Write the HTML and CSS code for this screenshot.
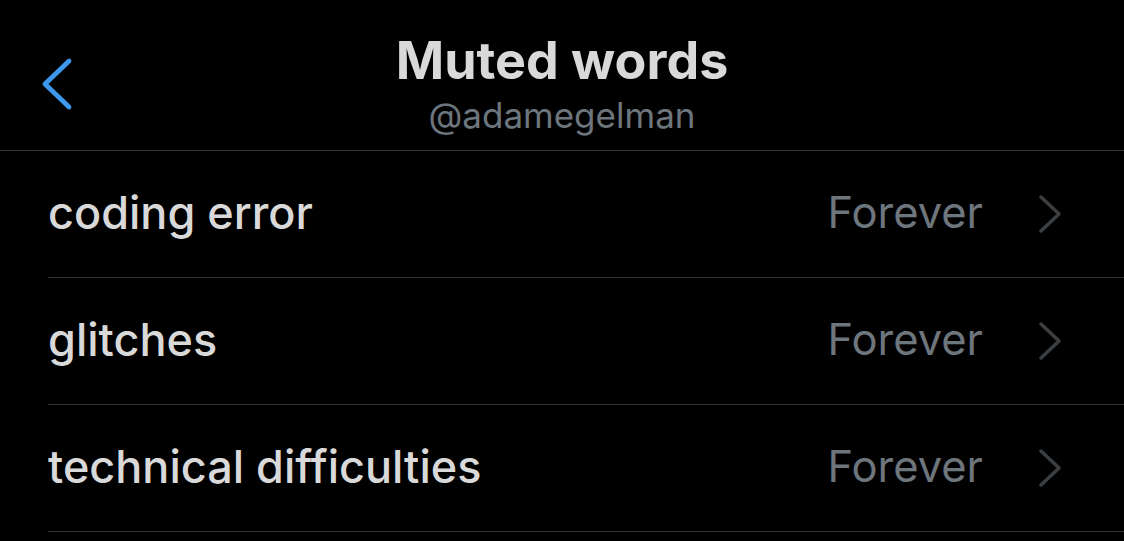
FILE: index.html
```html
<!DOCTYPE html>
<html lang="en">

<head>
	<meta charset="utf-8">
	<title>Muted words</title>
	<link rel="stylesheet" href="styles.css">
</head>

<body>
	<header class="topbar">
		<button class="tilbage" aria-label="Back">
			<svg width="40" height="56" viewBox="0 0 40 56">
				<polyline points="28,4 4,27 28,50" fill="none" stroke="#3d98eb" stroke-width="4.8" stroke-linecap="round" stroke-linejoin="round" />
			</svg>
		</button>
		<div class="titel">
			<h1>Muted words</h1>
			<p class="bruger">@adamegelman</p>
		</div>
	</header>

	<ul class="ordliste">
		<li class="ord">
			<span class="navn">coding error</span>
			<span class="varighed">Forever</span>
			<svg class="pil" width="24" height="40" viewBox="0 0 24 40">
				<polyline points="3,3 21,20 3,37" fill="none" stroke="#3c3f42" stroke-width="3.5" stroke-linecap="round" stroke-linejoin="round" />
			</svg>
		</li>
		<li class="ord">
			<span class="navn">glitches</span>
			<span class="varighed">Forever</span>
			<svg class="pil" width="24" height="40" viewBox="0 0 24 40">
				<polyline points="3,3 21,20 3,37" fill="none" stroke="#3c3f42" stroke-width="3.5" stroke-linecap="round" stroke-linejoin="round" />
			</svg>
		</li>
		<li class="ord">
			<span class="navn">technical difficulties</span>
			<span class="varighed">Forever</span>
			<svg class="pil" width="24" height="40" viewBox="0 0 24 40">
				<polyline points="3,3 21,20 3,37" fill="none" stroke="#3c3f42" stroke-width="3.5" stroke-linecap="round" stroke-linejoin="round" />
			</svg>
		</li>
	</ul>
</body>

</html>
```

FILE: styles.css
```css
body {
	margin: 0;
	background-color: #000;
	font-family: Inter, "Liberation Sans", sans-serif;
	color: #d9d9d9;
}

.topbar {
	position: relative;
	height: 150px;
	border-bottom: 1px solid #2f3336;
	display: flex;
	justify-content: center;
	align-items: center;
}

.tilbage {
	position: absolute;
	left: 41px;
	top: 57px;
	padding: 0;
	background: none;
	border: none;
	display: block;
}

.tilbage svg {
	display: block;
}

.titel {
	text-align: center;
	margin-top: 18px;
}

h1 {
	margin: 0;
	font-size: 52px;
	font-weight: 700;
	line-height: 58px;
	color: #d9d9d9;
}

.bruger {
	margin: 4px 0 0;
	font-size: 35px;
	line-height: 42px;
	color: #6e767d;
}

.ordliste {
	list-style: none;
	margin: 0 0 0 48px;
	padding: 0;
}

.ord {
	height: 126px;
	border-bottom: 1px solid #2f3336;
	display: flex;
	align-items: center;
	padding-right: 62px;
}

.navn {
	flex: 1;
	font-size: 45px;
	font-weight: 500;
	color: #d9d9d9;
	margin-top: -4px;
}

.varighed {
	font-size: 43.5px;
	color: #6e767d;
	margin-right: 55px;
	margin-top: -4px;
}

.pil {
	display: block;
}
```
